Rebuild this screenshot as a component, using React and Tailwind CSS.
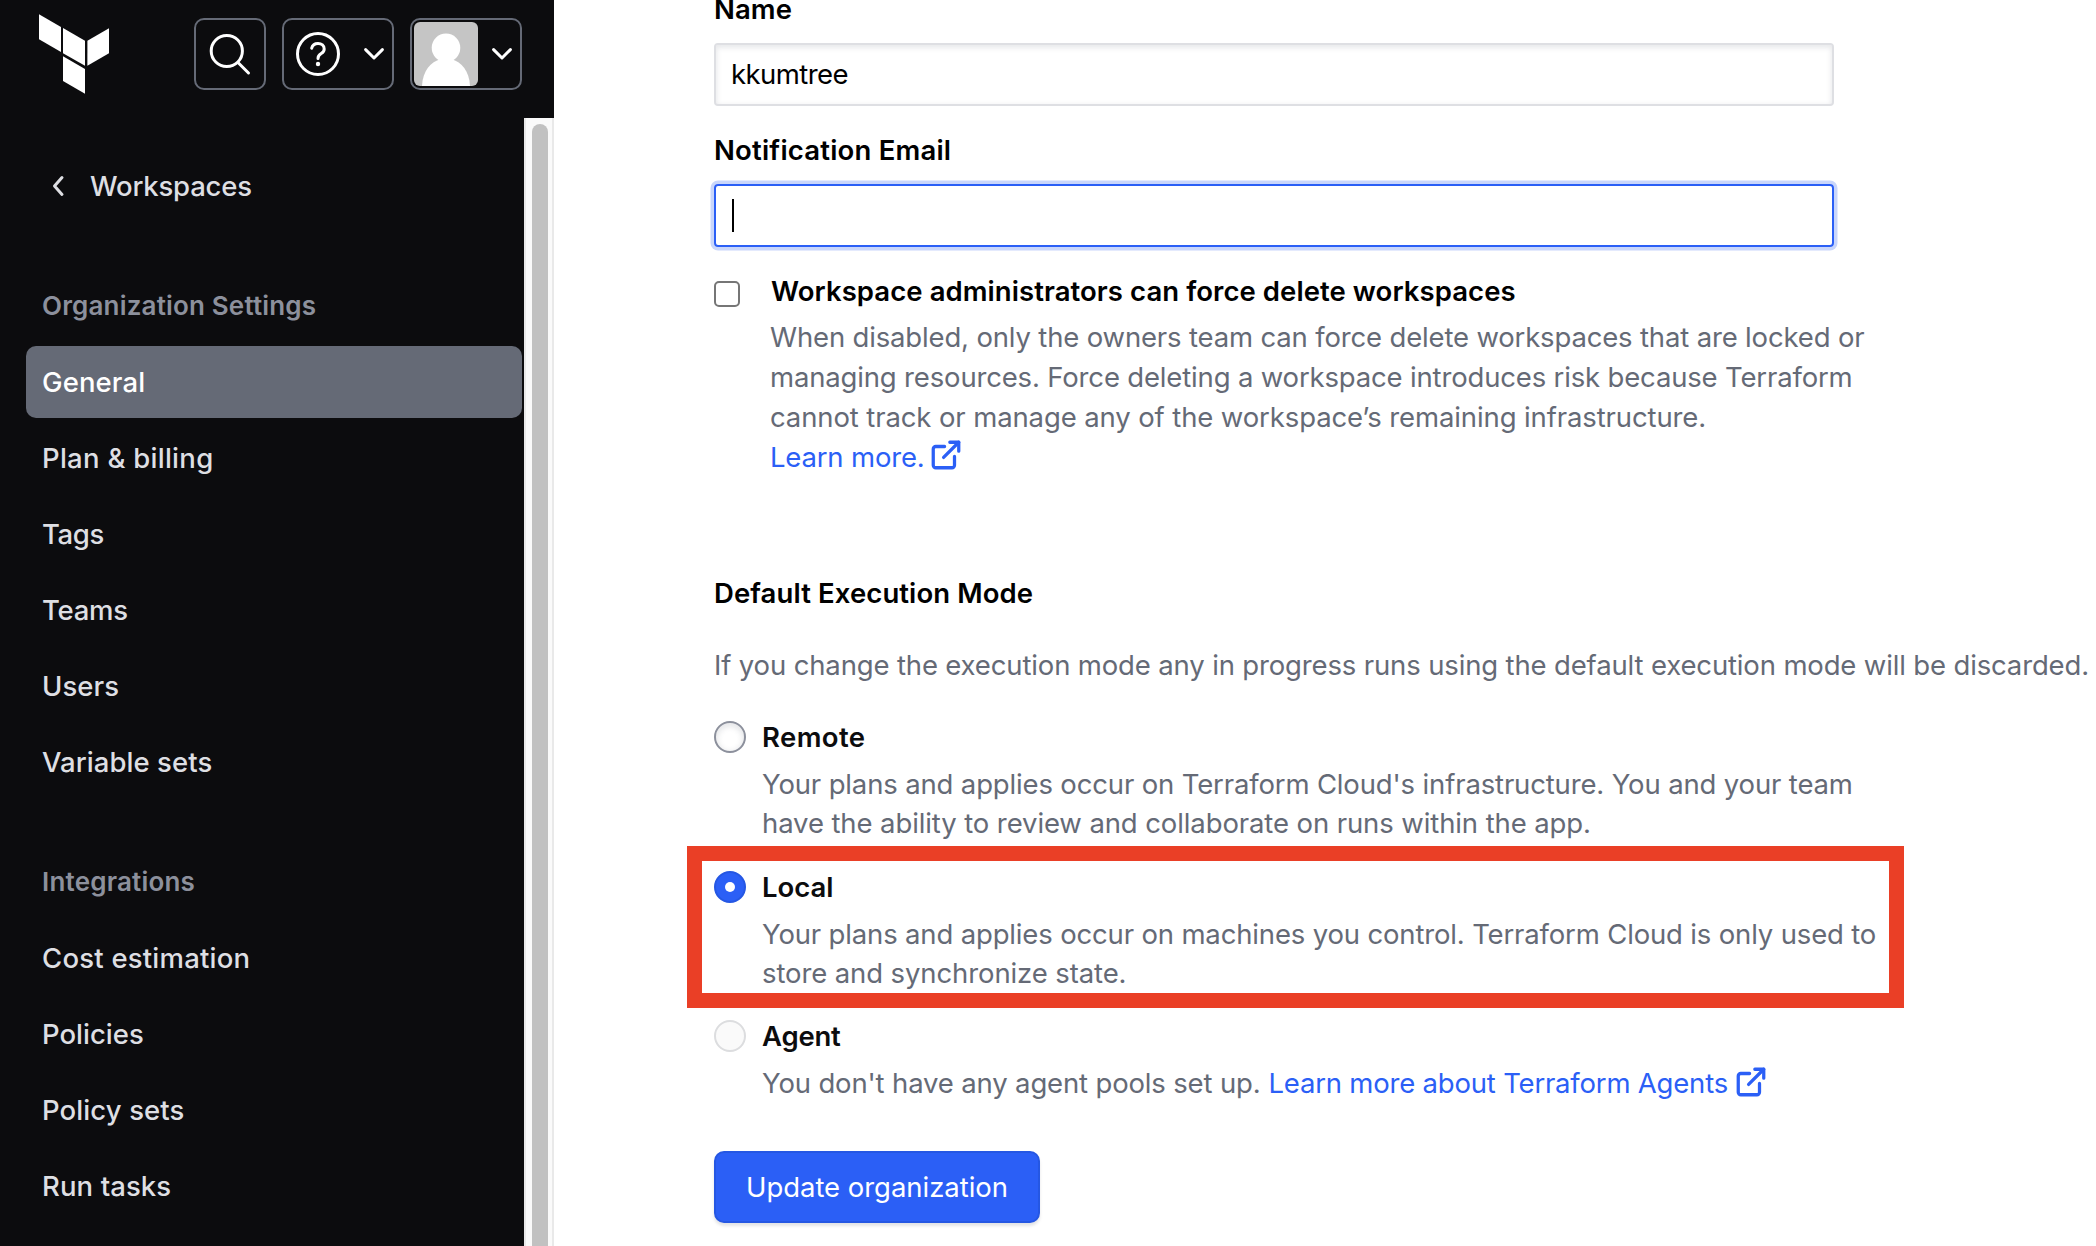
const sections = [
  {
    title: "Organization Settings",
    tracking: "tracking-[0.17px]",
    items: [
      { label: "General", tracking: "tracking-[0.1px]", active: true },
      { label: "Plan & billing", tracking: "tracking-[0.27px]" },
      { label: "Tags", tracking: "tracking-[-0.4px]" },
      { label: "Teams", tracking: "tracking-[-0.25px]" },
      { label: "Users", tracking: "tracking-[0.1px]" },
      { label: "Variable sets", tracking: "tracking-[0.06px]" },
    ],
  },
  {
    title: "Integrations",
    tracking: "tracking-[0.2px]",
    items: [
      { label: "Cost estimation", tracking: "tracking-[0.22px]" },
      { label: "Policies", tracking: "tracking-[0px]" },
      { label: "Policy sets", tracking: "tracking-[0.1px]" },
      { label: "Run tasks", tracking: "tracking-[0.1px]" },
    ],
  },
];

function TerraformLogo() {
  return (
    <svg width="70" height="80" viewBox="0 0 70 80" fill="#fff" className="mt-[14px] shrink-0">
      <polygon points="0,0.3 22,13 22,38 0,25.3" />
      <polygon points="24,14 46,26.8 46,51.8 24,39.2" />
      <polygon points="48.4,26.8 70,14.2 70,39.2 48.4,51.8" />
      <polygon points="24,42.3 46,55 46,79.8 24,67" />
    </svg>
  );
}

function ChevronDown() {
  return (
    <svg width="22" height="14" viewBox="0 0 22 14" fill="none" stroke="#fff" strokeWidth="3" strokeLinecap="round" strokeLinejoin="round">
      <path d="M2.6 2.6 L11 11 L19.4 2.6" />
    </svg>
  );
}

function ExternalLink() {
  return (
    <svg
      width="34"
      height="34"
      viewBox="0 0 24 24"
      fill="none"
      stroke="currentColor"
      strokeWidth="2.3"
      strokeLinecap="round"
      strokeLinejoin="round"
      className="-translate-y-[2px] shrink-0"
    >
      <path d="M18 13v6.2a1.8 1.8 0 0 1-1.8 1.8H4.8A1.8 1.8 0 0 1 3 19.2V7.8A1.8 1.8 0 0 1 4.8 6H11" />
      <path d="M14.7 3H21v6.3" />
      <path d="M10.3 13.7L21 3" />
    </svg>
  );
}

function Header() {
  return (
    <header className="flex h-[118px] shrink-0 items-start bg-[#0c0c0e] pl-[39px]">
      <TerraformLogo />
      <div className="mt-[18px] ml-[85px] flex gap-4">
        <button className="flex h-[72px] w-[72px] items-center justify-center rounded-[10px] border-2 border-[#656a76]">
          <svg width="44" height="44" viewBox="0 0 44 44" fill="none" stroke="#fff" strokeWidth="3" strokeLinecap="round">
            <circle cx="18.8" cy="19" r="15.6" />
            <path d="M30.5 31 L40.5 41" />
          </svg>
        </button>
        <button className="flex h-[72px] w-[112px] items-center rounded-[10px] border-2 border-[#656a76] pl-3">
          <svg width="44" height="44" viewBox="0 0 44 44" fill="none" stroke="#fff" strokeWidth="3" strokeLinecap="round" strokeLinejoin="round">
            <circle cx="22" cy="22" r="20.5" />
            <path d="M15.7 16.2 C16.5 12.8 19 11.4 22 11.4 C25.6 11.4 28.2 13.7 28.2 16.9 C28.2 19.3 26.8 20.5 25.2 21.5 C23.4 22.6 22 23.6 22 26.4" />
            <circle cx="22" cy="32" r="2.2" fill="#fff" stroke="none" />
          </svg>
          <span className="ml-[23px]">
            <ChevronDown />
          </span>
        </button>
        <button className="flex h-[72px] w-[112px] items-center rounded-[10px] border-2 border-[#656a76] pl-[2px]">
          <svg width="64" height="64" viewBox="0 0 64 64" className="rounded-[6px] bg-[#c5c5c5]">
            <circle cx="32" cy="25.8" r="14.3" fill="#fff" />
            <path d="M8 64 C8.6 49 17 39.5 26.5 37.3 H37.5 C47 39.5 55.4 49 56 64 Z" fill="#fff" />
          </svg>
          <span className="ml-[13px]">
            <ChevronDown />
          </span>
        </button>
      </div>
    </header>
  );
}

function Sidebar() {
  return (
    <aside className="flex w-[554px] shrink-0 flex-col">
      <Header />
      <div className="flex min-h-0 flex-1">
        <nav className="w-[524px] overflow-hidden bg-[#0c0c0e] pt-8 pl-[26px] text-[27.5px] font-medium text-[#dedfe3]">
          <a className="flex h-[72px] items-center pl-[26px]">
            <svg width="13" height="22" viewBox="0 0 13 22" fill="none" stroke="currentColor" strokeWidth="3" strokeLinecap="round" strokeLinejoin="round">
              <path d="M10 2.5 L2.5 11 L10 19.5" />
            </svg>
            <span className="ml-[25px] pt-[2px] tracking-[-0.2px]">Workspaces</span>
          </a>
          {sections.map((section) => (
            <section key={section.title} className="mt-12 flex w-[496px] flex-col gap-1">
              <h2 className={`flex h-[72px] items-center pb-[2px] pl-4 text-[26px] font-semibold text-[#8c909c] ${section.tracking}`}>
                {section.title}
              </h2>
              {section.items.map((item) => (
                <a
                  key={item.label}
                  className={`flex h-[72px] items-center rounded-[10px] pt-[2px] pl-4 ${item.tracking} ${
                    item.active ? "bg-[#656a76] text-white" : ""
                  }`}
                >
                  {item.label}
                </a>
              ))}
            </section>
          ))}
        </nav>
        <div className="flex w-[30px] border-x-2 border-[#e9e9e9] bg-[#fafafa] pt-[6px] pl-[6px]">
          <div className="w-4 rounded-t-full bg-[#c1c1c1]" />
        </div>
      </div>
    </aside>
  );
}

function Radio({ state }) {
  if (state === "checked") {
    return (
      <span className="flex size-8 items-center justify-center rounded-full border-2 border-[#2557e3] bg-[#2b5ff6]">
        <span className="size-[10px] rounded-full bg-white" />
      </span>
    );
  }
  if (state === "disabled") {
    return <span className="size-8 rounded-full border-2 border-[#dcdddf] bg-[#fafafa]" />;
  }
  return <span className="size-8 rounded-full border-2 border-[#8c909c] bg-white shadow-[inset_0_2px_5px_2px_rgba(101,106,118,0.15)]" />;
}

function Option({ label, tracking, state, className = "", children }) {
  return (
    <div className={`flex gap-4 ${className}`}>
      <Radio state={state} />
      <div>
        <div className={`h-8 leading-8 font-semibold text-[#0c0c0e] ${tracking}`}>{label}</div>
        <div className="mt-3 leading-[39px] whitespace-nowrap text-[#656a76]">{children}</div>
      </div>
    </div>
  );
}

export default function App() {
  return (
    <div className="flex h-[1246px] w-[2096px] overflow-hidden bg-white font-[Inter,'Liberation_Sans',sans-serif]">
      <Sidebar />
      <main className="flex min-w-0 flex-1 flex-col items-start pl-40 text-[27.5px] leading-10 text-black">
        <label className="-mt-[11px] font-semibold tracking-[0.1px]">Name</label>
        <div className="mt-[14px] flex h-[63px] w-[1120px] items-center rounded-[4px] border-2 border-[#dedfe3] pb-[2px] pl-[15px] tracking-[-0.58px] shadow-[inset_0_2px_5px_1px_rgba(101,106,118,0.15)]">
          kkumtree
        </div>
        <label className="mt-6 font-semibold tracking-[0.2px]">Notification Email</label>
        <div className="mt-[14px] flex h-[63px] w-[1120px] items-center rounded-[4px] border-2 border-[#2b5ff6] pl-4 shadow-[0_0_0_3.5px_#c9d6fb]">
          <span className="h-[33px] w-[2px] bg-black" />
        </div>

        <div className="mt-6 flex gap-[30px]">
          <span className="mt-[10px] size-[26px] shrink-0 rounded-[5px] border-2 border-[#767676] bg-white" />
          <div className="whitespace-nowrap">
            <div className="pl-px font-semibold tracking-[0.07px]">Workspace administrators can force delete workspaces</div>
            <div className="mt-[6px] text-[#656a76]">
              <div className="tracking-[-0.162px]">When disabled, only the owners team can force delete workspaces that are locked or</div>
              <div className="tracking-[-0.165px]">managing resources. Force deleting a workspace introduces risk because Terraform</div>
              <div className="tracking-[-0.116px]">cannot track or manage any of the workspace’s remaining infrastructure.</div>
              <a className="flex h-10 items-center gap-[4px] text-[#2b5ff6]">
                <span className="tracking-[-0.18px]">Learn more.</span>
                <ExternalLink />
              </a>
            </div>
          </div>
        </div>

        <h3 className="mt-24 font-semibold tracking-[0.1px]">Default Execution Mode</h3>
        <p className="mt-8 whitespace-nowrap text-[#656a76] tracking-[-0.148px]">
          If you change the execution mode any in progress runs using the default execution mode will be discarded.
        </p>

        <Option className="mt-9" label="Remote" tracking="tracking-[0.4px]">
          <div className="tracking-[-0.15px]">Your plans and applies occur on Terraform Cloud's infrastructure. You and your team</div>
          <div className="tracking-[-0.105px]">have the ability to review and collaborate on runs within the app.</div>
        </Option>

        <div className="relative mt-7">
          <Option state="checked" label="Local" tracking="tracking-[0px]">
            <div className="tracking-[-0.16px]">Your plans and applies occur on machines you control. Terraform Cloud is only used to</div>
            <div className="tracking-[-0.109px]">store and synchronize state.</div>
          </Option>
          <div className="absolute -top-[25px] -left-[27px] h-[162px] w-[1217px] border-[15px] border-[#ea3f26]" />
        </div>

        <Option className="mt-[27px]" state="disabled" label="Agent" tracking="tracking-[-0.2px]">
          <div className="flex items-center">
            <span className="tracking-[-0.156px]">You don't have any agent pools set up.</span>
            <a className="ml-[8px] flex h-[39px] items-center gap-[6px] text-[#2b5ff6]">
              <span className="tracking-[-0.2px]">Learn more about Terraform Agents</span>
              <ExternalLink />
            </a>
          </div>
        </Option>

        <button className="mt-12 flex h-[72px] w-[326px] shrink-0 items-center rounded-[10px] border-2 border-[#2557e3] bg-[#2b5ff6] pl-[30px] whitespace-nowrap text-white tracking-[-0.04px] shadow-[0_3px_3px_rgba(101,106,118,0.18)]">
          Update organization
        </button>
      </main>
    </div>
  );
}
